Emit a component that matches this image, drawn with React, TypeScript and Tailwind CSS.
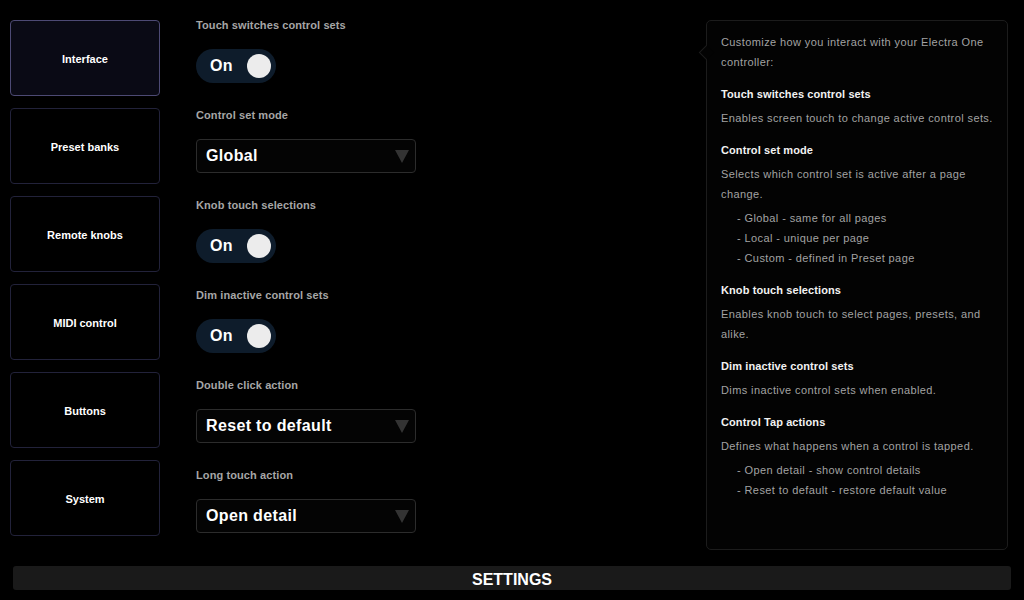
import React from "react";

const font = { fontFamily: '"Liberation Sans", Arial, sans-serif' };

const navItems = ["Interface", "Preset banks", "Remote knobs", "MIDI control", "Buttons", "System"];

function Toggle() {
  return (
    <div className="flex h-[34px] w-[80px] items-center justify-between rounded-full bg-[#0e1c2b] pl-[14px] pr-[5px]">
      <span className="text-[16px] font-bold leading-none tracking-[0.3px] text-white">On</span>
      <span className="h-[24px] w-[24px] rounded-full bg-[#ececec]" />
    </div>
  );
}

function Select({ value }: { value: string }) {
  return (
    <div className="flex h-[34px] w-[220px] items-center justify-between rounded-[4px] border border-[#2c2c2c] bg-[#040404] pl-[9px] pr-[6px]">
      <span className="text-[16px] font-bold leading-none tracking-[0.35px] text-white">{value}</span>
      <svg width="14" height="13" viewBox="0 0 14 13">
        <polygon points="0,0 14,0 7,13" fill="#333333" />
      </svg>
    </div>
  );
}

function Section({ label, children }: { label: string; children: React.ReactNode }) {
  return (
    <div className="flex flex-col">
      <div className="h-[20px] text-[11px] font-bold leading-[20px] tracking-[0.1px] text-[#a6a6a6]">{label}</div>
      <div className="mt-[14px]">{children}</div>
    </div>
  );
}

function Heading({ children }: { children: React.ReactNode }) {
  return <div className="mt-[12px] text-[11px] font-bold leading-[20px] tracking-[0.1px] text-[#f2f2f2]">{children}</div>;
}

function Desc({ children }: { children: React.ReactNode }) {
  return <div className="mt-[4px] text-[11px] leading-[20px] tracking-[0.4px] text-[#a2a2a2]">{children}</div>;
}

function Items({ items }: { items: string[] }) {
  return (
    <div className="mt-[4px] flex flex-col pl-[16px]">
      {items.map((t) => (
        <div key={t} className="text-[11px] leading-[20px] tracking-[0.4px] text-[#a2a2a2]">
          {t}
        </div>
      ))}
    </div>
  );
}

export default function App() {
  return (
    <div className="h-[600px] w-[1024px] overflow-hidden bg-black" style={font}>
      <div className="flex h-[550px]">
        <nav className="ml-[10px] mt-[20px] flex w-[150px] flex-col gap-[12px]">
          {navItems.map((n, i) => (
            <div
              key={n}
              className={
                i === 0
                  ? "flex h-[76px] items-center justify-center rounded-[4px] border border-[#4d4a74] bg-[#0a0a15] pt-[2px] text-[11px] font-bold text-white"
                  : "flex h-[76px] items-center justify-center rounded-[4px] border border-[#22223a] bg-black pt-[2px] text-[11px] font-bold text-white"
              }
            >
              {n}
            </div>
          ))}
        </nav>
        <main className="ml-[36px] flex w-[510px] flex-col gap-[22px] pt-[15px]">
          <Section label="Touch switches control sets">
            <Toggle />
          </Section>
          <Section label="Control set mode">
            <Select value="Global" />
          </Section>
          <Section label="Knob touch selections">
            <Toggle />
          </Section>
          <Section label="Dim inactive control sets">
            <Toggle />
          </Section>
          <Section label="Double click action">
            <Select value="Reset to default" />
          </Section>
          <Section label="Long touch action">
            <Select value="Open detail" />
          </Section>
        </main>
        <aside className="relative mt-[20px] h-[530px] w-[302px] rounded-[5px] border border-[#1c1c1c] bg-[#030303] pl-[14px] pr-[4px] pt-[11px]">
          <div className="absolute left-[-6px] top-[26px] h-[11px] w-[11px] rotate-45 border-b border-l border-[#1c1c1c] bg-[#030303]" />
          <div className="relative pr-[10px] text-[11px] leading-[20px] tracking-[0.4px] text-[#a2a2a2]">
            Customize how you interact with your Electra One controller:
          </div>
          <Heading>Touch switches control sets</Heading>
          <Desc>Enables screen touch to change active control sets.</Desc>
          <Heading>Control set mode</Heading>
          <div className="pr-[10px]">
            <Desc>Selects which control set is active after a page change.</Desc>
          </div>
          <Items items={["- Global - same for all pages", "- Local - unique per page", "- Custom - defined in Preset page"]} />
          <Heading>Knob touch selections</Heading>
          <div className="pr-[10px]">
            <Desc>Enables knob touch to select pages, presets, and alike.</Desc>
          </div>
          <Heading>Dim inactive control sets</Heading>
          <Desc>Dims inactive control sets when enabled.</Desc>
          <Heading>Control Tap actions</Heading>
          <Desc>Defines what happens when a control is tapped.</Desc>
          <Items items={["- Open detail - show control details", "- Reset to default - restore default value"]} />
        </aside>
      </div>
      <footer className="ml-[13px] mt-[16px] flex h-[24px] w-[998px] items-center justify-center rounded-[3px] bg-[#1a1a1a] pt-[3px] text-[16px] font-bold text-white">
        SETTINGS
      </footer>
    </div>
  );
}
